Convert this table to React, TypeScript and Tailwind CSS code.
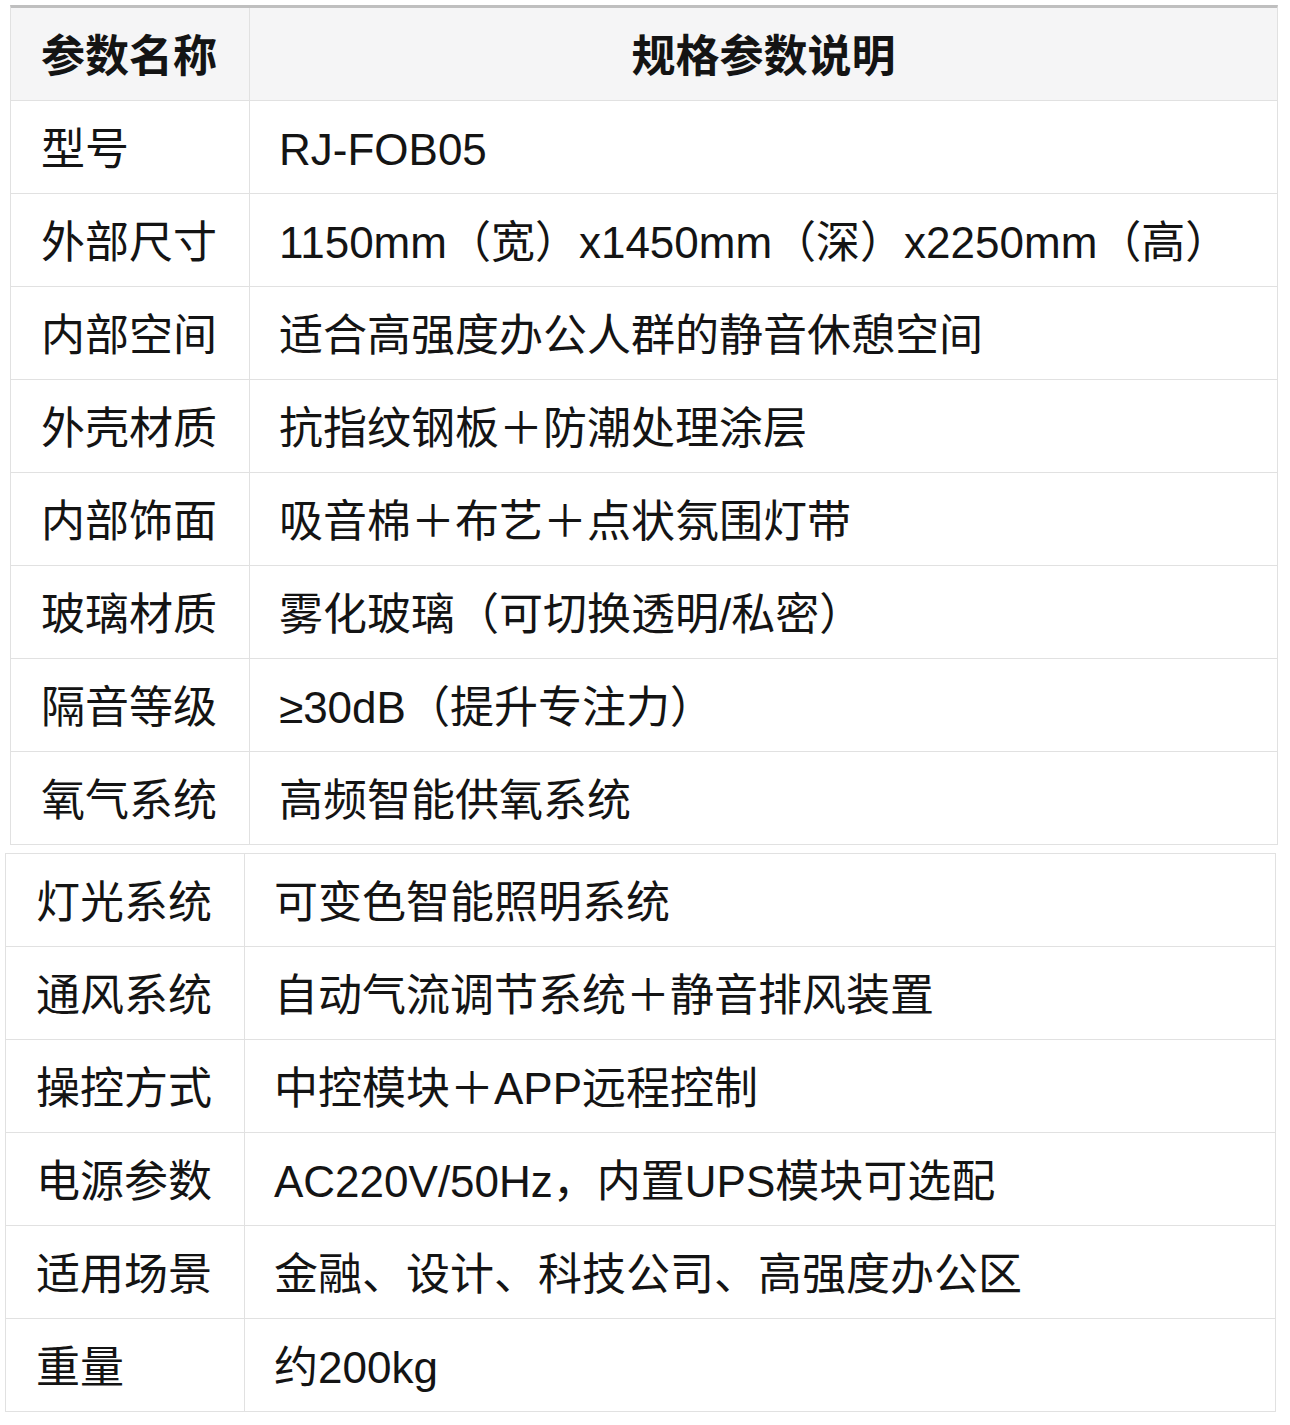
import React from 'react';

const font = { fontFamily: '"Liberation Sans", "Noto Sans CJK SC", sans-serif' };

const topRows: [string, string][] = [
  ['型号', 'RJ-FOB05'],
  ['外部尺寸', '1150mm（宽）x1450mm（深）x2250mm（高）'],
  ['内部空间', '适合高强度办公人群的静音休憩空间'],
  ['外壳材质', '抗指纹钢板＋防潮处理涂层'],
  ['内部饰面', '吸音棉＋布艺＋点状氛围灯带'],
  ['玻璃材质', '雾化玻璃（可切换透明/私密）'],
  ['隔音等级', '≥30dB（提升专注力）'],
  ['氧气系统', '高频智能供氧系统'],
];

const bottomRows: [string, string][] = [
  ['灯光系统', '可变色智能照明系统'],
  ['通风系统', '自动气流调节系统＋静音排风装置'],
  ['操控方式', '中控模块＋APP远程控制'],
  ['电源参数', 'AC220V/50Hz，内置UPS模块可选配'],
  ['适用场景', '金融、设计、科技公司、高强度办公区'],
  ['重量', '约200kg'],
];

const Row = ({ name, value }: { name: string; value: string }) => (
  <div className="grid grid-cols-[239px_1fr] h-[93px] border-b border-[#e1e1e1]">
    <div className="flex items-center pl-[30px] pt-[6px] border-r border-[#e1e1e1] whitespace-nowrap">{name}</div>
    <div className="flex items-center pl-[29px] pt-[6px] whitespace-nowrap">{value}</div>
  </div>
);

export default function App() {
  return (
    <div className="w-[1290px] h-[1425px] bg-white text-[#141414] text-[44px] leading-none pt-[5px] overflow-hidden" style={font}>
      {/* upper table */}
      <div className="ml-[10px] w-[1268px] border-x border-[#e1e1e1] border-t-[3px] border-t-[#bfbfbf]">
        <div className="grid grid-cols-[239px_1fr] h-[93px] bg-[#f5f5f6] border-b border-[#e1e1e1] font-bold">
          <div className="flex items-center pl-[30px] pt-[6px] border-r border-[#e1e1e1]">参数名称</div>
          <div className="flex items-center justify-center pt-[6px]">规格参数说明</div>
        </div>
        {topRows.map(([n, v]) => (
          <Row key={n} name={n} value={v} />
        ))}
      </div>

      {/* lower table */}
      <div className="mt-[8px] ml-[5px] w-[1271px] border-x border-t border-[#e1e1e1]">
        {bottomRows.map(([n, v]) => (
          <Row key={n} name={n} value={v} />
        ))}
      </div>
    </div>
  );
}
